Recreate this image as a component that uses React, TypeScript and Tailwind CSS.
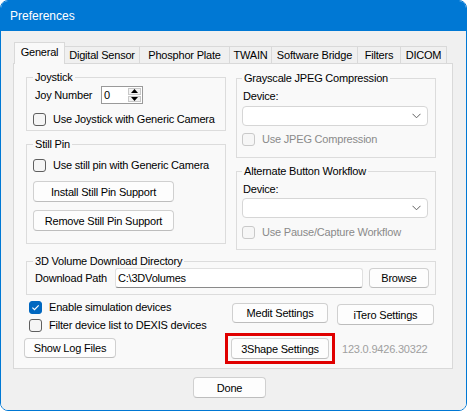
import React from "react";

type Kids = { children?: React.ReactNode; className?: string };

const CheckBox = ({
  label,
  checked = false,
  disabled = false,
  className = "",
}: {
  label: string;
  checked?: boolean;
  disabled?: boolean;
  className?: string;
}) => (
  <div
    className={`flex items-center h-[18px] gap-[7px] ${disabled ? "text-[#8a8a8a]" : "text-black"} ${className}`}
  >
    <span
      className={`w-[13px] h-[13px] rounded-[3px] border flex items-center justify-center shrink-0 ${
        checked
          ? "bg-[#0067c0] border-[#0067c0]"
          : disabled
            ? "bg-[#f6f6f6] border-[#c9c9c9]"
            : "bg-[#f5f5f5] border-[#5f5f5f]"
      }`}
    >
      {checked && (
        <svg width="11" height="11" viewBox="0 0 11 11">
          <path d="M2.4 5.6 L4.5 7.7 L8.7 3.3" fill="none" stroke="#fff" strokeWidth="1.2" />
        </svg>
      )}
    </span>
    <span className="leading-[16px] whitespace-nowrap">{label}</span>
  </div>
);

const Button = ({ children, className = "" }: Kids) => (
  <button
    className={`flex items-center justify-center rounded-[4px] border border-[#d0d0d0] border-b-[#bdbdbd] bg-[#fdfdfd] text-black leading-[16px] whitespace-nowrap ${className}`}
  >
    {children}
  </button>
);

const Group = ({ title, children, className = "" }: Kids & { title: string }) => (
  <fieldset className={`border border-[#dcdcdc] ${className}`}>
    <legend className="px-[2px] leading-[14px] whitespace-nowrap">{title}</legend>
    {children}
  </fieldset>
);

const Combo = ({ className = "" }: Kids) => (
  <div
    className={`h-[20px] w-[186px] rounded-[4px] border border-[#d6d6d6] bg-white flex items-center justify-end pr-[6px] ${className}`}
  >
    <svg width="9" height="6" viewBox="0 0 9 6">
      <polyline points="0.5,0.8 4.5,4.8 8.5,0.8" fill="none" stroke="#606060" strokeWidth="1" />
    </svg>
  </div>
);

const Spin = () => (
  <div className="flex h-[18px] w-[42px] border border-[#9a9a9a] bg-white">
    <div className="flex-1 pl-[2px] leading-[16px]">0</div>
    <div className="flex flex-col w-[14px] py-px pr-px gap-px">
      <div className="flex-1 border border-[#c8c8c8] bg-[#f2f2f2] flex items-center justify-center">
        <svg width="7" height="4" viewBox="0 0 7 4">
          <polygon points="0,4 3.5,0 7,4" fill="#000" />
        </svg>
      </div>
      <div className="flex-1 border border-[#c8c8c8] bg-[#f2f2f2] flex items-center justify-center">
        <svg width="7" height="4" viewBox="0 0 7 4">
          <polygon points="0,0 3.5,4 7,0" fill="#000" />
        </svg>
      </div>
    </div>
  </div>
);

const tabs = [
  { name: "General", w: "w-[51px]", active: true },
  { name: "Digital Sensor", w: "w-[75px]" },
  { name: "Phosphor Plate", w: "w-[90px]" },
  { name: "TWAIN", w: "w-[42px]" },
  { name: "Software Bridge", w: "w-[86px]" },
  { name: "Filters", w: "w-[43px]" },
  { name: "DICOM", w: "w-[46px]" },
];

export default function App() {
  return (
    <div className="w-[467px] h-[411px] bg-white font-['Liberation_Sans',Arial,sans-serif] text-[11px] tracking-[-0.2px] text-black">
      <div className="w-full h-full rounded-[8px] border border-[#0078d4] overflow-hidden flex flex-col">
        <div className="h-[30px] bg-[#0078d4] text-white text-[12px] tracking-normal flex items-center pl-[9px] shrink-0">
          Preferences
        </div>

        <div className="flex-1 bg-[#f0f0f0] pl-[12px] pt-[11px]">
          {/* tabs */}
          <div className="relative z-10 -mb-px flex items-end ml-px">
            {tabs.map((t) =>
              t.active ? (
                <div
                  key={t.name}
                  className={`${t.w} h-[22px] bg-[#f9f9f9] border border-b-0 border-[#d9d9d9] flex items-center justify-center pb-[2px]`}
                >
                  {t.name}
                </div>
              ) : (
                <div
                  key={t.name}
                  className={`${t.w} h-[18px] bg-[#f0f0f0] border-t border-r border-b border-[#d9d9d9] flex items-center justify-center whitespace-nowrap`}
                >
                  {t.name}
                </div>
              ),
            )}
          </div>

          {/* tab page */}
          <div className="w-[440px] h-[306px] bg-[#f9f9f9] border border-[#d9d9d9] pl-[12px] pt-[6px]">
            <div className="grid grid-cols-[200px_200px] gap-x-[10px] gap-y-[4px] items-start">
              <div className="flex flex-col">
                <Group title="Joystick" className="px-[6px] pb-[2px]">
                  <div className="mt-[2px] flex items-center h-[18px] pl-[2px]">
                    <span className="w-[66px] leading-[16px]">Joy Number</span>
                    <Spin />
                  </div>
                  <CheckBox label="Use Joystick with Generic Camera" className="mt-[6px]" />
                </Group>

                <Group title="Still Pin" className="mt-[6px] px-[6px] pb-[12px]">
                  <CheckBox label="Use still pin with Generic Camera" className="mt-[5px]" />
                  <Button className="mt-[7px] w-[141px] h-[21px]">Install Still Pin Support</Button>
                  <Button className="mt-[8px] w-[141px] h-[21px]">Remove Still Pin Support</Button>
                </Group>
              </div>

              <div className="flex flex-col mt-px">
                <Group title="Grayscale JPEG Compression" className="px-[5px] pb-[9px]">
                  <div className="mt-[3px] pl-px leading-[16px]">Device:</div>
                  <Combo className="mt-[2px]" />
                  <CheckBox label="Use JPEG Compression" disabled className="mt-[4px] gap-[6px]" />
                </Group>

                <Group title="Alternate Button Workflow" className="mt-[6px] px-[5px] pb-[8px]">
                  <div className="mt-[3px] pl-px leading-[16px]">Device:</div>
                  <Combo className="mt-px" />
                  <CheckBox label="Use Pause/Capture Workflow" disabled className="mt-[5px] gap-[6px]" />
                </Group>
              </div>

              <Group title="3D Volume Download Directory" className="col-span-2 px-[6px] pb-[6px]">
                <div className="flex items-center pl-[2px]">
                  <span className="w-[80px] leading-[16px]">Download Path</span>
                  <div className="w-[248px] h-[20px] bg-white border border-[#e0e0e0] border-b-[#8a8a8a] rounded-[3px] flex items-center pl-[2px] leading-[16px]">
                    C:\3DVolumes
                  </div>
                  <Button className="ml-[6px] w-[60px] h-[20px]">Browse</Button>
                </div>
              </Group>
            </div>

            {/* bottom controls */}
            <div className="-ml-[2px] mt-[3px] grid grid-cols-[201px_auto]">
              <div className="pl-[5px] flex flex-col">
                <CheckBox label="Enable simulation devices" checked className="gap-[6px]" />
                <CheckBox label="Filter device list to DEXIS devices" className="gap-[6px]" />
              </div>
              <div className="flex items-start pl-[7px] pt-[5px] gap-[9px]">
                <Button className="w-[96px] h-[20px]">Medit Settings</Button>
                <Button className="w-[97px] h-[21px] mt-px">iTero Settings</Button>
              </div>

              <div>
                <Button className="mt-[4px] w-[92px] h-[20px]">Show Log Files</Button>
              </div>
              <div className="flex items-center -mt-px">
                <div className="w-[110px] h-[31px] border-[3px] border-[#e00000] flex items-center justify-center">
                  <Button className="w-[98px] h-[21px]">3Shape Settings</Button>
                </div>
                <span className="ml-[7px] text-[#a0a0a0] leading-[16px]">123.0.9426.30322</span>
              </div>
            </div>
          </div>

          <Button className="mt-[8px] ml-[180px] w-[73px] h-[21px] border-[#0067c0] border-b-[#0067c0]">
            Done
          </Button>
        </div>
      </div>
    </div>
  );
}
